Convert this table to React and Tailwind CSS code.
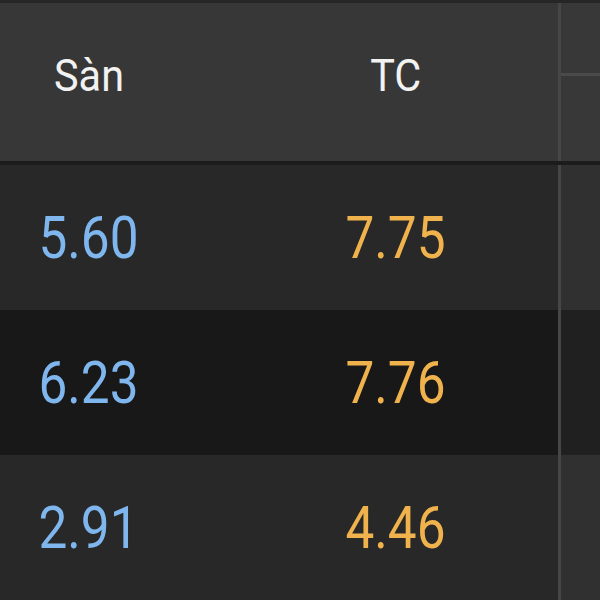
import React from 'react';

const rows = [
  { san: '5.60', tc: '7.75', bg: 'bg-[#282828]', side: 'bg-[#303030]' },
  { san: '6.23', tc: '7.76', bg: 'bg-[#181818]', side: 'bg-[#202020]' },
  { san: '2.91', tc: '4.46', bg: 'bg-[#282828]', side: 'bg-[#303030]' },
];

export default function App() {
  return (
    <div className="w-[600px] h-[600px] overflow-hidden bg-[#282828] font-['Roboto',sans-serif]">
      {/* top strip */}
      <div className="h-[3px] bg-[#262626]" />

      {/* Header */}
      <div className="flex h-[158px] bg-[#373737]">
        <div className="w-[558px] grid grid-cols-[178px_1fr] items-center pb-[14px]">
          <div className="text-center text-[45px] leading-none text-[#f2f2f2]">
            <span className="inline-block scale-x-[0.92]">Sàn</span>
          </div>
          <div className="pl-[56px] text-center text-[45px] leading-none text-[#f2f2f2]">
            <span className="inline-block scale-x-[0.92]">TC</span>
          </div>
        </div>
        <div className="w-[3px] bg-[#464646]" />
        <div className="flex-1 flex flex-col">
          <div className="h-[70px] bg-[#383838]" />
          <div className="h-[3px] bg-[#4a4a4a]" />
          <div className="flex-1 bg-[#383838]" />
        </div>
      </div>
      <div className="h-[4px] bg-[#1c1c1c]" />

      {/* Rows */}
      {rows.map((r, i) => (
        <div key={i} className={`flex h-[145px] ${r.bg}`}>
          <div className="w-[558px] grid grid-cols-[178px_1fr] items-center">
            <div className="text-center text-[59px] leading-none text-[#7fb6ee]">
              <span className="inline-block scale-x-[0.87]">{r.san}</span>
            </div>
            <div className="pl-[56px] text-center text-[59px] leading-none text-[#efb24c]">
              <span className="inline-block scale-x-[0.87]">{r.tc}</span>
            </div>
          </div>
          <div className="w-[3px] bg-[#464646]" />
          <div className={`flex-1 ${r.side}`} />
        </div>
      ))}
    </div>
  );
}
